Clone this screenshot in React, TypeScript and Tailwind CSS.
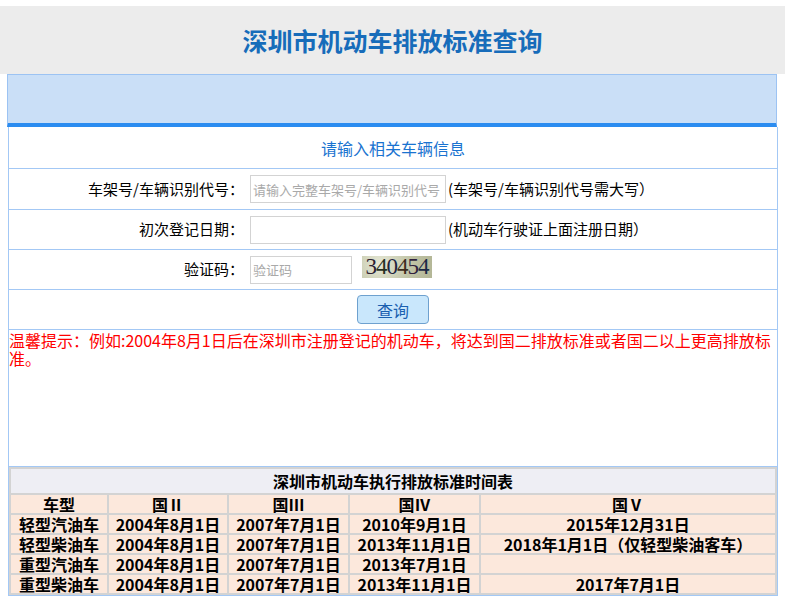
const rows = [
  ["轻型汽油车", "2004年8月1日", "2007年7月1日", "2010年9月1日", "2015年12月31日"],
  ["轻型柴油车", "2004年8月1日", "2007年7月1日", "2013年11月1日", "2018年1月1日（仅轻型柴油客车）"],
  ["重型汽油车", "2004年8月1日", "2007年7月1日", "2013年7月1日", ""],
  ["重型柴油车", "2004年8月1日", "2007年7月1日", "2013年11月1日", "2017年7月1日"],
];

const heads = ["车型", "国Ⅱ", "国Ⅲ", "国Ⅳ", "国Ⅴ"];

// captcha digits, each tinted a little differently
function Captcha() {
  const digits = [
    { c: "3", color: "#2e1f33" },
    { c: "4", color: "#26301f" },
    { c: "0", color: "#1f2540" },
    { c: "4", color: "#3d2b1c" },
    { c: "5", color: "#2f1f3d" },
    { c: "4", color: "#1a2845" },
  ];
  return (
    <div className="ml-[10px] mb-[6px] flex h-[22px] w-[70px] items-center justify-center bg-[#cfd1b8] bg-[radial-gradient(circle_at_25%_35%,#e6e8d6_0,#c2c5a8_55%,#b3b696_100%)] font-['Liberation_Serif',serif] text-[23px] leading-none tracking-[-1px]">
      {digits.map((d, i) => (
        <span key={i} style={{ color: d.color }}>
          {d.c}
        </span>
      ))}
    </div>
  );
}

export default function App() {
  return (
    <div className="w-[785px] bg-white font-['Noto_Sans_CJK_SC',sans-serif] text-black">
      <div className="h-[6px]" />
      <div className="flex h-[68px] items-center justify-center bg-[#ececec]">
        <h1 className="text-[25px] font-bold leading-none text-[#176cba]">深圳市机动车排放标准查询</h1>
      </div>

      <div className="ml-[7px] h-[53px] w-[770px] border-x border-t border-b-4 border-[#9cc3f3] border-b-[#2b8cf0] bg-[#cadff7]" />

      <div className="ml-[8px] w-[770px] border-x border-b border-[#a3c8f5]">
        <div className="flex h-[42px] items-center justify-center border-b border-[#a3c8f5] text-[16px] text-[#1a73d0]">
          请输入相关车辆信息
        </div>

        <div className="flex h-[41px] items-center border-b border-[#a3c8f5] text-[15px]">
          <div className="w-[241px] pr-[6px] text-right">车架号/车辆识别代号：</div>
          <input
            className="h-[28px] w-[196px] border border-[#d3d3d3] px-[2px] text-[13px] outline-none placeholder:text-[#a9a9a9]"
            placeholder="请输入完整车架号/车辆识别代号"
          />
          <span className="ml-[2px]">(车架号/车辆识别代号需大写）</span>
        </div>

        <div className="flex h-[40px] items-center border-b border-[#a3c8f5] text-[15px]">
          <div className="w-[241px] pr-[6px] text-right">初次登记日期：</div>
          <input className="h-[28px] w-[196px] border border-[#d3d3d3] px-[2px] text-[13px] outline-none" />
          <span className="ml-[2px]">(机动车行驶证上面注册日期）</span>
        </div>

        <div className="flex h-[40px] items-center border-b border-[#a3c8f5] text-[15px]">
          <div className="w-[241px] pr-[6px] text-right">验证码：</div>
          <input
            className="h-[28px] w-[102px] border border-[#d3d3d3] px-[2px] text-[13px] outline-none placeholder:text-[#a9a9a9]"
            placeholder="验证码"
          />
          <Captcha />
        </div>

        <div className="flex h-[40px] items-center justify-center border-b border-[#a3c8f5]">
          <button className="h-[29px] w-[72px] rounded-[4px] border border-[#6ea1cf] bg-[#c9e7fc] text-[16px] text-[#1a5fb0]">
            查询
          </button>
        </div>

        <div className="h-[137px] border-b border-[#a3c8f5] pt-[1px] text-[16px] leading-[18px] text-[#ff0000]">
          温馨提示：例如:2004年8月1日后在深圳市注册登记的机动车，将达到国二排放标准或者国二以上更高排放标准。
        </div>

        <table className="w-[768px] table-fixed border-separate border-spacing-[2px] bg-[#d3d3d3] text-[16px] font-bold leading-[18px]">
          <colgroup>
            <col className="w-[96px]" />
            <col className="w-[118px]" />
            <col className="w-[119px]" />
            <col className="w-[129px]" />
            <col />
          </colgroup>
          <tbody>
            <tr>
              <td colSpan={5} className="h-[24px] bg-[#eeeef4] p-0 text-center">
                深圳市机动车执行排放标准时间表
              </td>
            </tr>
            <tr>
              {heads.map((h) => (
                <td key={h} className="h-[18px] bg-[#fce8dc] p-0 text-center">
                  {h}
                </td>
              ))}
            </tr>
            {rows.map((r) => (
              <tr key={r[0]}>
                {r.map((c, i) => (
                  <td key={i} className="h-[18px] whitespace-nowrap bg-[#fce8dc] p-0 text-center">
                    {c}
                  </td>
                ))}
              </tr>
            ))}
          </tbody>
        </table>
      </div>
    </div>
  );
}
